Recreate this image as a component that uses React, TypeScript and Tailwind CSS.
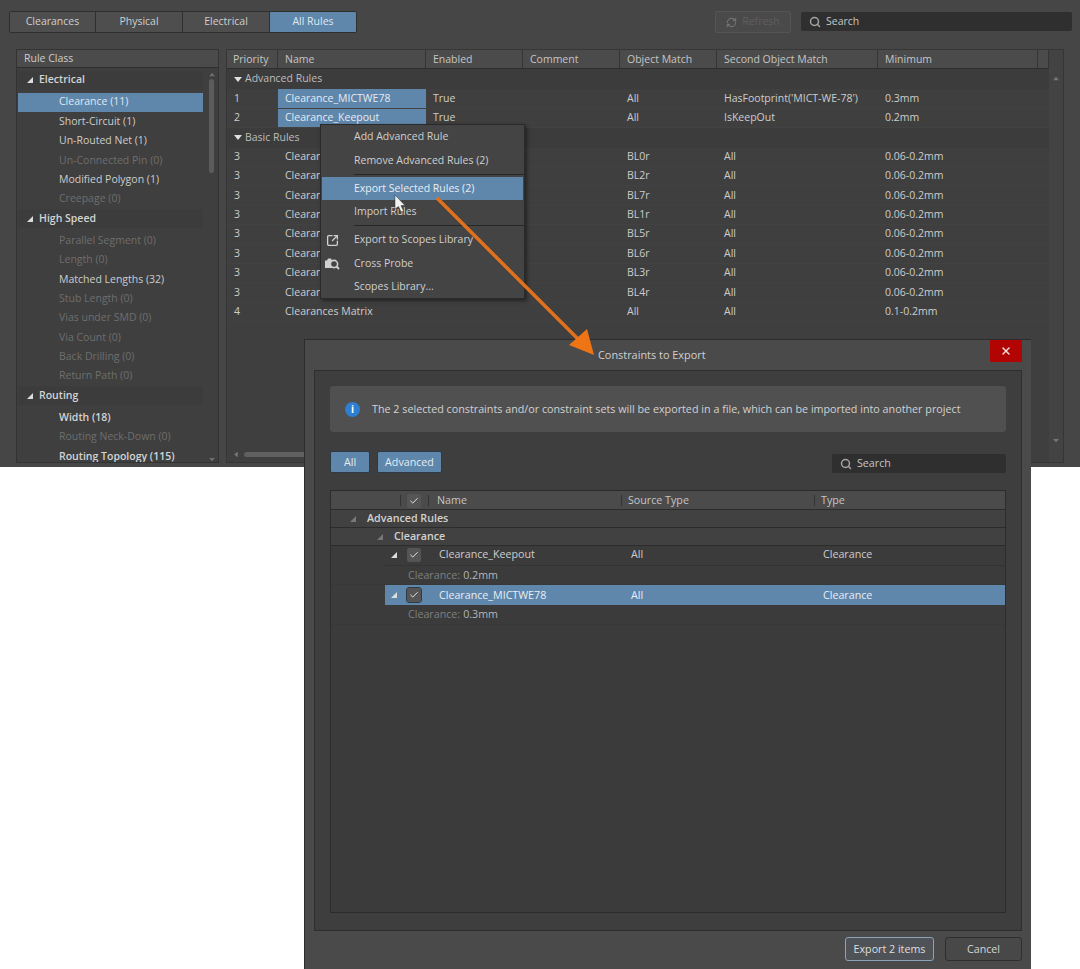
import React from "react";
import { Search, RefreshCw, X, Info, Check, SquareArrowOutUpRight } from "lucide-react";

const TriDown = ({ className = "" }: { className?: string }) => (
  <svg width="8" height="5" viewBox="0 0 8 5" className={className}><path d="M0 0H8L4 5Z" fill="currentColor" /></svg>
);
const Corner = ({ className = "" }: { className?: string }) => (
  <svg width="6" height="6" viewBox="0 0 6 6" className={className}><path d="M6 0V6H0Z" fill="currentColor" /></svg>
);

const tabs = [
  { t: "Clearances", w: "w-[86px]" },
  { t: "Physical", w: "w-[87px]" },
  { t: "Electrical", w: "w-[87px]" },
  { t: "All Rules", w: "w-[86px]", on: true },
];

type L = { t: string; g?: boolean; on?: boolean; off?: boolean; b?: boolean };
const left: L[] = [
  { t: "Electrical", g: true },
  { t: "Clearance (11)", on: true },
  { t: "Short-Circuit (1)" },
  { t: "Un-Routed Net (1)" },
  { t: "Un-Connected Pin (0)", off: true },
  { t: "Modified Polygon (1)" },
  { t: "Creepage (0)", off: true },
  { t: "High Speed", g: true },
  { t: "Parallel Segment (0)", off: true },
  { t: "Length (0)", off: true },
  { t: "Matched Lengths (32)" },
  { t: "Stub Length (0)", off: true },
  { t: "Vias under SMD (0)", off: true },
  { t: "Via Count (0)", off: true },
  { t: "Back Drilling (0)", off: true },
  { t: "Return Path (0)", off: true },
  { t: "Routing", g: true },
  { t: "Width (18)", b: true },
  { t: "Routing Neck-Down (0)", off: true },
  { t: "Routing Topology (115)", b: true },
];

const cols = [
  { t: "Priority", w: "w-[51px] pl-[6px]" },
  { t: "Name", w: "w-[148px] pl-[7px]" },
  { t: "Enabled", w: "w-[97px] pl-[7px]" },
  { t: "Comment", w: "w-[97px] pl-[7px]" },
  { t: "Object Match", w: "w-[97px] pl-[7px]" },
  { t: "Second Object Match", w: "w-[161px] pl-[7px]" },
  { t: "Minimum", w: "w-[160px] pl-[7px]" },
  { t: "", w: "w-[11px]" },
];

const basic = ["BL0r", "BL2r", "BL7r", "BL1r", "BL5r", "BL6r", "BL3r", "BL4r"];

function Row({ p, n, en = "", om, so, mi, sel }: { p: string; n: string; en?: string; om: string; so: string; mi: string; sel?: boolean }) {
  return (
    <div className="flex h-[19.4px] items-center border-b border-[#424242] text-[#cdcdcd]">
      <div className="w-[51px] pl-[7px]">{p}</div>
      <div className={`flex h-full w-[148px] items-center pl-[7px] ${sel ? "bg-[#5f86ab] text-[#e4ecf3]" : ""}`}>{n}</div>
      <div className="w-[97px] pl-[7px]">{en}</div>
      <div className="w-[97px]" />
      <div className="w-[97px] pl-[7px]">{om}</div>
      <div className="w-[161px] pl-[7px]">{so}</div>
      <div className="pl-[7px]">{mi}</div>
    </div>
  );
}

function GroupRow({ t, h }: { t: string; h: string }) {
  return (
    <div className={`flex ${h} items-center bg-[#3c3c3c] pl-[7px] text-[#bdbdbd]`}>
      <TriDown className="mr-[3px] text-[#e0e0e0]" />
      {t}
    </div>
  );
}

function MenuItem({ t, on, icon }: { t: string; on?: boolean; icon?: React.ReactNode }) {
  return (
    <div className={`relative flex h-[23.4px] shrink-0 items-center ${on ? "mx-px bg-[#5f86ab] pl-[32px] text-[#e8eef4]" : "pl-[33px] text-[#cfcfcf]"}`}>
      {icon && <span className="absolute left-[3px] flex w-[16px] justify-center text-[#d0d0d0]">{icon}</span>}
      {t}
    </div>
  );
}

const Sep = () => (
  <div className="h-[4.6px] shrink-0 pt-[1.3px] pl-[33px]">
    <div className="h-px bg-[#272727]" />
  </div>
);

function Chk({ on }: { on?: boolean }) {
  return (
    <span className={`flex h-[14px] w-[14px] items-center justify-center rounded-[2px] bg-[#555555] text-[#e4e4e4] ${on ? "outline outline-[#2f3a46]" : ""}`}>
      <Check size={10} strokeWidth={2.4} />
    </span>
  );
}

function DRow({ t, on, pb = "" }: { t: string; on?: boolean; pb?: string }) {
  return (
    <div className={`ml-[54px] flex h-[20px] items-center ${pb} ${on ? "bg-[#5f86ab] text-[#e8eef4]" : "border-b border-[#333333] text-[#cdcdcd]"}`}>
      <Corner className="ml-[6px] mr-[10px] text-[#dddddd]" />
      <Chk on={on} />
      <span className="ml-[18px] w-[192px]">{t}</span>
      <span className="w-[192px]">All</span>
      <span>Clearance</span>
    </div>
  );
}

function DSub({ t, h }: { t: string; h: string }) {
  return (
    <div className={`flex ${h} items-center border-b border-[#383838] pl-[77px] text-[#7f7f7f]`}>
      Clearance:<span className="ml-[3px] text-[#b5b5b5]">{t}</span>
    </div>
  );
}

export default function App() {
  return (
    <div className="relative h-[969px] w-[1080px] overflow-hidden bg-white text-[10.5px] [font-family:'Open_Sans',sans-serif]">
      {/* main window */}
      <div className="flex h-[467px] flex-col bg-[#464646]">
        <div className="flex h-[49px] items-start pt-[11px] pl-[9px]">
          <div className="flex h-[22px] overflow-hidden rounded-[2px] border border-[#2f2f2f]">
            {tabs.map((t) => (
              <div key={t.t} className={`flex ${t.w} items-center justify-center border-r border-[#2f2f2f] last:border-r-0 ${t.on ? "bg-[#5f86ab] text-[#dfe8f0]" : "bg-[#4e4e4e] text-[#cfcfcf]"}`}>
                {t.t}
              </div>
            ))}
          </div>
          <div className="ml-[358px] flex h-[22px] w-[76px] items-center justify-center gap-[5px] rounded-[2px] border border-[#555555] bg-[#4a4a4a] text-[#5f5f5f]">
            <RefreshCw size={11} strokeWidth={2.5} className="text-[#727272]" />
            Refresh
          </div>
          <div className="ml-[10px] mt-px flex h-[19px] w-[271px] items-center gap-[5px] rounded-[2px] bg-[#2f2f2f] pl-[8px] text-[#c5c5c5]">
            <Search size={12} strokeWidth={3} className="text-[#a5a5a5]" />
            Search
          </div>
        </div>

        <div className="flex h-[415px] gap-[7px] pl-[16px]">
          {/* Rule class */}
          <div className="flex h-[414px] w-[203px] flex-col overflow-hidden border border-[#333333] bg-[#3f3f3f]">
            <div className="flex h-[18px] shrink-0 items-center border-b border-[#2e2e2e] bg-[#4b4b4b] pl-[7px] text-[#cdcdcd]">Rule Class</div>
            <div className="relative flex-1 pr-[15px] pl-px pt-[2.6px]">
              {left.map((r) =>
                r.g ? (
                  <div key={r.t} className="mb-[2.7px] flex h-[19.3px] items-center bg-[#3c3c3c] pl-[9px] font-semibold text-[#d4d4d4]">
                    <Corner className="mr-[6px] text-[#dcdcdc]" />
                    {r.t}
                  </div>
                ) : (
                  <div key={r.t} className={`flex h-[19.4px] items-center pl-[41px] ${r.on ? "bg-[#5f86ab] text-[#e0e8f0]" : r.off ? "text-[#6e6e6e]" : r.b ? "font-semibold text-[#d4d4d4]" : "text-[#cdcdcd]"}`}>
                    {r.t}
                  </div>
                ),
              )}
              <div className="absolute top-[4px] right-[3px] bottom-[4px] flex w-[7px] flex-col items-center text-[#6f6f6f]">
                <TriDown className="rotate-180 scale-75" />
                <div className="mt-[2px] h-[94px] w-[5px] rounded-full bg-[#5c5c5c]" />
                <TriDown className="mt-auto scale-75" />
              </div>
            </div>
          </div>

          {/* Table */}
          <div className="flex h-[414px] w-[838px] border border-[#363636] bg-[#3f3f3f]">
            <div className="flex min-w-0 w-[823px] flex-col">
              <div className="flex h-[19px] shrink-0 border-b border-[#2e2e2e] bg-[#4b4b4b] text-[#c5c5c5]">
                {cols.map((c) => (
                  <div key={c.t + c.w} className={`${c.w} flex items-center border-r border-[#353535] pt-[1px]`}>{c.t}</div>
                ))}
              </div>
              <div className="flex-1">
                <GroupRow t="Advanced Rules" h="h-[20.4px]" />
                <Row p="1" n="Clearance_MICTWE78" en="True" om="All" so="HasFootprint('MICT-WE-78')" mi="0.3mm" sel />
                <Row p="2" n="Clearance_Keepout" en="True" om="All" so="IsKeepOut" mi="0.2mm" sel />
                <GroupRow t="Basic Rules" h="h-[19.4px]" />
                {basic.map((b) => (
                  <Row key={b} p="3" n="Clearances" om={b} so="All" mi="0.06-0.2mm" />
                ))}
                <Row p="4" n="Clearances Matrix" om="All" so="All" mi="0.1-0.2mm" />
              </div>
              <div className="mb-[1px] flex h-[14px] items-center pl-[5px] text-[#777777]">
                <TriDown className="rotate-90 scale-75" />
                <div className="ml-[4px] h-[5px] w-[200px] rounded-full bg-[#606060]" />
              </div>
            </div>
            <div className="flex w-[14px] flex-col items-center justify-between bg-[#434343] pt-[26px] pb-[19px] text-[#777777]">
              <TriDown className="rotate-180 scale-75" />
              <TriDown className="scale-75" />
            </div>
          </div>
        </div>
      </div>

      {/* context menu */}
      <div className="absolute top-[124px] left-[320px] flex h-[175px] w-[205px] flex-col border border-[#2a2a2a] bg-[#444444] pt-[0.6px] shadow-[2px_2px_4px_rgba(0,0,0,0.45)]">
        <MenuItem t="Add Advanced Rule" />
        <MenuItem t="Remove Advanced Rules (2)" />
        <Sep />
        <MenuItem t="Export Selected Rules (2)" on />
        <MenuItem t="Import Rules" />
        <Sep />
        <MenuItem t="Export to Scopes Library" icon={<SquareArrowOutUpRight size={13} strokeWidth={2.4} />} />
        <MenuItem
          t="Cross Probe"
          icon={
            <svg width="16" height="13" viewBox="0 0 16 13">
              <path d="M1 3.500H3L4 1.500H7L8 3.500V11H1Z" fill="#d0d0d0" />
              <circle cx="10" cy="7" r="3.600" fill="#444444" stroke="#d0d0d0" strokeWidth="1.600" />
              <path d="M12.500 9.500L15 12" stroke="#d0d0d0" strokeWidth="2" />
            </svg>
          }
        />
        <MenuItem t="Scopes Library..." />
      </div>

      {/* dialog */}
      <div className="absolute top-[339px] left-[304px] flex h-[630px] w-[727px] flex-col border-t border-l border-[#2c2c2c] bg-[#4a4a4a] text-[10.7px]">
        <div className="relative flex h-[30px] shrink-0 items-center pl-[293px] text-[10.9px] text-[#d0d0d0]">
          <span>Constraints to Export</span>
          <div className="absolute top-0 right-[9px] flex h-[22px] w-[32px] items-center justify-center rounded-[1px] bg-[#b30404] text-[#f4dddd]">
            <X size={12} strokeWidth={3} />
          </div>
        </div>
        <div className="mx-[9px] flex h-[561px] flex-col border border-[#2e2e2e] bg-[#3e3e3e] px-[15px] pt-[15px]">
          <div className="flex h-[46px] items-center gap-[12px] rounded-[3px] bg-[#505050] pt-px pl-[15px] text-[10.75px] text-[#d2d2d2]">
            <span className="flex h-[15px] w-[15px] items-center justify-center rounded-full bg-[#2f7fd0] text-white">
              <Info size={15} className="text-[#dfeeff]" strokeWidth={0} />
              <span className="absolute text-[10px] font-bold">i</span>
            </span>
            The 2 selected constraints and/or constraint sets will be exported in a file, which can be imported into another project
          </div>
          <div className="mt-[19px] flex h-[22px] items-center">
            <div className="flex h-[22px] w-[40px] items-center justify-center rounded-[2px] border border-[#2d3a47] bg-[#5f86ab] pt-px text-[#e4ecf3]">All</div>
            <div className="ml-[7px] flex h-[22px] w-[65px] items-center justify-center rounded-[2px] border border-[#2d3a47] bg-[#5f86ab] pt-px text-[#e4ecf3]">Advanced</div>
            <div className="mt-[3px] ml-auto flex h-[19px] w-[174px] items-center gap-[5px] rounded-[2px] bg-[#2f2f2f] pl-[8px] text-[#c5c5c5]">
              <Search size={12} strokeWidth={3} className="text-[#a5a5a5]" />
              Search
            </div>
          </div>
          <div className="mt-[17px] flex h-[423px] flex-col border border-[#2c2c2c] bg-[#3b3b3b]">
            <div className="flex h-[19px] shrink-0 items-center border-b border-[#2c2c2c] bg-[#4b4b4b] pt-px text-[#c5c5c5]">
              <span className="ml-[69px] h-[11px] w-px bg-[#333333]" />
              <span className="ml-[6px]"><Chk /></span>
              <span className="ml-[7px] h-[11px] w-px bg-[#333333]" />
              <span className="ml-[8px] w-[184px]">Name</span>
              <span className="h-[11px] w-px bg-[#333333]" />
              <span className="ml-[6px] w-[186px]">Source Type</span>
              <span className="h-[11px] w-px bg-[#333333]" />
              <span className="ml-[6px]">Type</span>
            </div>
            <div className="flex h-[18px] items-center border-b border-[#2c2c2c] bg-[#414141] pl-[19px] font-semibold text-[#d2d2d2]">
              <Corner className="mr-[11px] text-[#777777]" />
              Advanced Rules
            </div>
            <div className="flex h-[18px] items-center border-b border-[#2c2c2c] bg-[#414141] pl-[46px] font-semibold text-[#d2d2d2]">
              <Corner className="mr-[11px] text-[#777777]" />
              Clearance
            </div>
            <DRow t="Clearance_Keepout" pb="pb-[2px]" />
            <DSub t="0.2mm" h="h-[19px]" />
            <DRow t="Clearance_MICTWE78" on />
            <DSub t="0.3mm" h="h-[20px]" />
          </div>
        </div>
        <div className="mr-[9px] flex flex-1 items-center justify-end gap-[11px] pb-[2px]">
          <div className="flex h-[24px] w-[89px] items-center justify-center rounded-[3px] border border-[#8ba3b8] bg-[#4f5358] text-[#dedede]">Export 2 items</div>
          <div className="flex h-[24px] w-[77px] items-center justify-center rounded-[3px] border border-[#2e2e2e] bg-[#484848] text-[#d5d5d5]">Cancel</div>
        </div>
      </div>

      {/* arrow annotation */}
      <svg className="pointer-events-none absolute top-0 left-0" width="1080" height="969" viewBox="0 0 1080 969">
        <path d="M437 198L580 341" stroke="#e2701c" strokeWidth="3.500" fill="none" />
        <path d="M569 345L587 329L594 355Z" fill="#ee7414" />
        <path d="M395 195V209L398.500 206.500L401 212L403.500 211L401 205.500H405Z" fill="#f2f2f2" stroke="#333333" strokeWidth="0.500" />
      </svg>
    </div>
  );
}
